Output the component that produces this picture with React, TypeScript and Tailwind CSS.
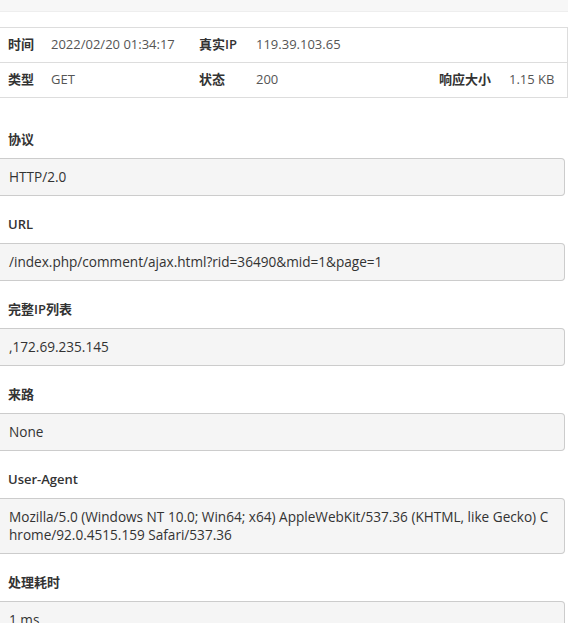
const font = { fontFamily: '"Open Sans", "Noto Sans CJK SC", sans-serif' };

const sections = [
  { label: '协议', value: 'HTTP/2.0' },
  { label: 'URL', value: '/index.php/comment/ajax.html?rid=36490&mid=1&page=1' },
  { label: '完整IP列表', value: ',172.69.235.145' },
  { label: '来路', value: 'None' },
  {
    label: 'User-Agent',
    value:
      'Mozilla/5.0 (Windows NT 10.0; Win64; x64) AppleWebKit/537.36 (KHTML, like Gecko) Chrome/92.0.4515.159 Safari/537.36',
  },
  { label: '处理耗时', value: '1 ms' },
];

function Cell({ children, bold }: { children?: React.ReactNode; bold?: boolean }) {
  return (
    <div className={`flex h-[34px] items-center px-2 text-[13px] ${bold ? 'font-semibold text-[#333]' : 'text-[#555]'}`}>
      {children}
    </div>
  );
}

export default function App() {
  return (
    <div className="w-[568px] bg-white" style={font}>
      <div className="h-[12px] border-b border-[#eee] bg-[#f7f7f7]" />

      <div className="mt-[15px] border border-l-0 border-[#ddd]">
        <div className="grid grid-cols-[43px_148px_57px_183px_70px_1fr] border-b border-[#ddd]">
          <Cell bold>时间</Cell>
          <Cell>2022/02/20 01:34:17</Cell>
          <Cell bold>真实IP</Cell>
          <Cell>119.39.103.65</Cell>
          <Cell />
          <Cell />
        </div>
        <div className="grid grid-cols-[43px_148px_57px_183px_70px_1fr]">
          <Cell bold>类型</Cell>
          <Cell>GET</Cell>
          <Cell bold>状态</Cell>
          <Cell>200</Cell>
          <Cell bold>响应大小</Cell>
          <Cell>1.15 KB</Cell>
        </div>
      </div>

      <div className="mt-[13px] pr-[3px]">
        {sections.map((s) => (
          <div key={s.label} className="flex flex-col pt-[20px]">
            <div className="mb-[9px] flex h-[18px] items-center pl-2 text-[13px] font-semibold text-[#333]">{s.label}</div>
            <div className="rounded-r-[4px] border border-l-0 border-[#ccc] bg-[#f5f5f5] px-[9px] py-[9px] text-[13.6px] leading-[18px] break-all text-[#333]">
              {s.value}
            </div>
          </div>
        ))}
      </div>
    </div>
  );
}
